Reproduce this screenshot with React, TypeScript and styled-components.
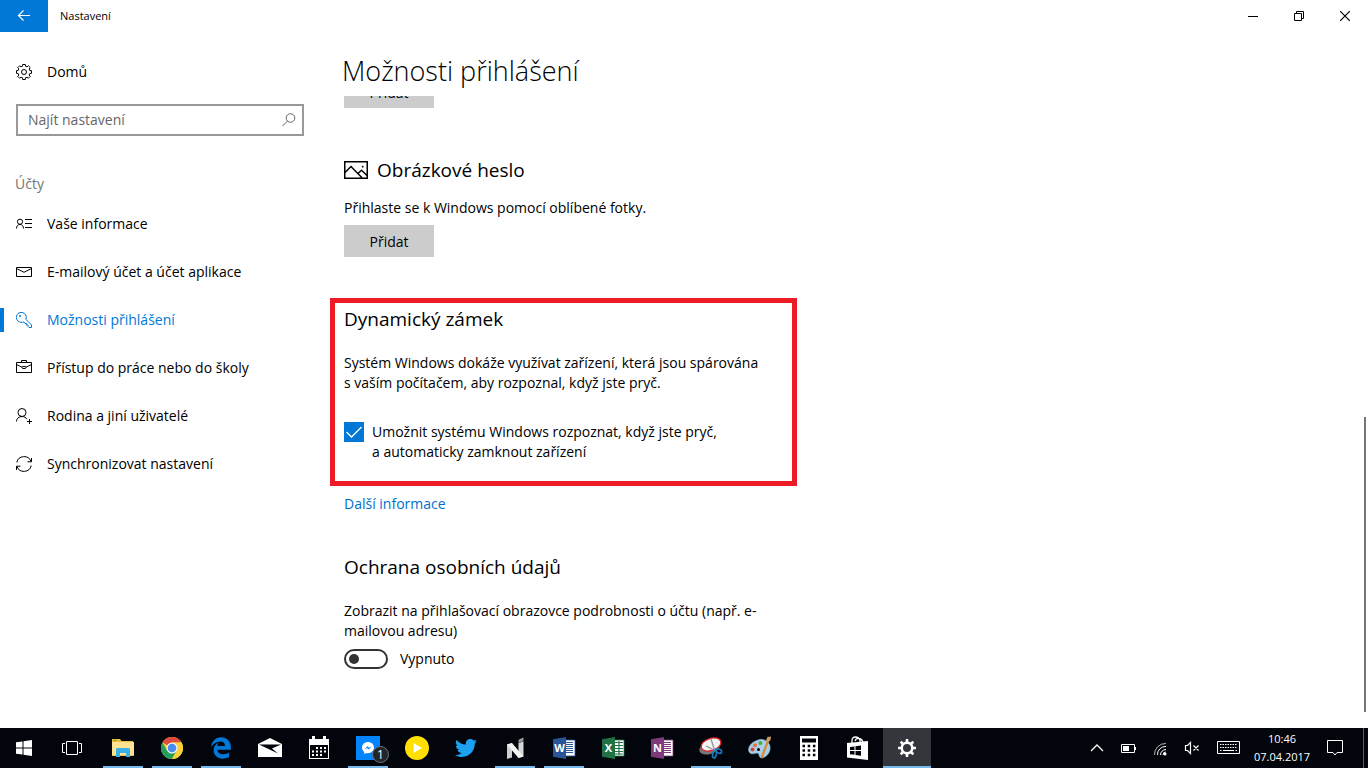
import React, { useState } from "react";
import styled, { createGlobalStyle, css } from "styled-components";
import { FaEdgeLegacy, FaTwitter } from "react-icons/fa6";

const accent = "#0078d7";

const GlobalStyle = createGlobalStyle`
  *, *::before, *::after { box-sizing: border-box; }
  body {
    margin: 0;
    background: #fff;
    color: #000;
    font-family: "Open Sans", "Noto Sans", sans-serif;
    font-size: 14px;
    line-height: 20px;
  }
  button, input { font: inherit; color: inherit; }
  h1, h2, p, ul { margin: 0; padding: 0; font-weight: 400; }
  ul { list-style: none; }
  svg { display: block; flex: none; }
`;

/* ---------- window ---------- */

const Desktop = styled.div`
  display: flex;
  flex-direction: column;
  min-height: 100vh;
`;

const TitleBar = styled.header`
  display: flex;
  align-items: center;
  height: 32px;
`;

const BackButton = styled.button`
  display: grid;
  place-items: center;
  width: 48px;
  height: 32px;
  padding: 0;
  border: 0;
  background: ${accent};
`;

const WindowTitle = styled.span`
  flex: 1;
  padding-left: 12px;
  font-size: 11px;
`;

const CaptionButton = styled.button`
  display: grid;
  place-items: center;
  width: 46px;
  height: 32px;
  padding: 0;
  border: 0;
  background: transparent;
`;

const Body = styled.div`
  flex: 1;
  display: grid;
  grid-template-columns: 320px 1fr;
`;

/* ---------- sidebar ---------- */

const Sidebar = styled.nav`
  display: flex;
  flex-direction: column;
  padding-top: 16px;
`;

const NavLink = styled.a<{ $active?: boolean }>`
  display: flex;
  align-items: center;
  height: 48px;
  color: ${(p) => (p.$active ? accent : "#000")};
  text-decoration: none;

  &::before {
    content: "";
    width: 4px;
    height: 24px;
    margin-right: 12px;
    background: ${(p) => (p.$active ? accent : "transparent")};
  }

  svg { margin-right: 15px; }
`;

const SearchBox = styled.label`
  display: flex;
  align-items: center;
  height: 32px;
  margin: 8px 16px 0;
  padding: 0 5px 0 10px;
  border: 2px solid #999;
  color: #666;
`;

const SearchInput = styled.input`
  flex: 1;
  min-width: 0;
  padding: 0;
  border: 0;
  outline: 0;
  background: transparent;

  &::placeholder { color: #666; opacity: 1; }
`;

const GroupLabel = styled.p`
  margin: 38px 0 6px;
  padding-left: 15px;
  color: #767676;
`;

/* ---------- content ---------- */

const Content = styled.main`
  display: flex;
  flex-direction: column;
`;

const PageTitle = styled.h1`
  height: 64px;
  padding: 21px 0 0 22px;
  font-size: 27px;
  font-weight: 300;
  line-height: 36px;
`;

const ScrollArea = styled.div`
  flex: 1;
  display: flex;
  justify-content: space-between;
`;

const Column = styled.div`
  width: 100%;
  max-width: 464px;
  padding: 0 0 40px 24px;
`;

const ScrollThumb = styled.div`
  align-self: flex-end;
  width: 2px;
  height: 295px;
  margin: 0 2px 16px 0;
  background: #767676;
`;

const ClippedRow = styled.div`
  display: flex;
  align-items: flex-end;
  height: 12px;
  overflow: hidden;
`;

const ActionButton = styled.button`
  flex: none;
  width: 90px;
  height: 32px;
  padding: 2px 0 0;
  border: 0;
  background: #ccc;
`;

const Section = styled.section<{ $space: number }>`
  display: flex;
  flex-direction: column;
  align-items: flex-start;
  margin-top: ${(p) => p.$space}px;
`;

const Highlight = styled(Section)`
  margin-left: -14px;
  margin-right: -13px;
  padding: 2px 18px 19px 9px;
  border: 5px solid #ed1c24;
`;

const SectionTitle = styled.h2<{ $gap?: number }>`
  display: flex;
  align-items: center;
  gap: 9px;
  margin-bottom: ${(p) => p.$gap ?? 20}px;
  font-size: 19px;
  line-height: 28px;
`;

const Paragraph = styled.p<{ $gap: number }>`
  margin-bottom: ${(p) => p.$gap}px;
`;

const CheckLabel = styled.label`
  display: flex;
  align-items: flex-start;
  gap: 8px;
`;

const CheckWrap = styled.span`
  display: grid;
  flex: none;
  width: 20px;
  height: 20px;

  > * { grid-area: 1 / 1; }
  svg { pointer-events: none; }
`;

const CheckInput = styled.input`
  appearance: none;
  width: 20px;
  height: 20px;
  margin: 0;
  border: 2px solid #333;

  &:checked { background: ${accent}; border-color: ${accent}; }
`;

const MoreLink = styled.a`
  display: inline-block;
  margin-top: 8px;
  color: #0070cc;
  text-decoration: none;
`;

const ToggleLabel = styled.label`
  display: flex;
  align-items: center;
  gap: 12px;
`;

const Toggle = styled.input`
  appearance: none;
  display: flex;
  align-items: center;
  width: 44px;
  height: 20px;
  margin: 0;
  padding: 0 3px;
  border: 2px solid #333;
  border-radius: 10px;

  &::before {
    content: "";
    width: 10px;
    height: 10px;
    border-radius: 50%;
    background: #333;
  }

  &:checked {
    justify-content: flex-end;
    border-color: ${accent};
    background: ${accent};
  }
  &:checked::before { background: #fff; }
`;

/* ---------- taskbar ---------- */

const Taskbar = styled.footer`
  display: flex;
  justify-content: space-between;
  height: 40px;
  background: #02050b;
  color: #fff;
`;

const AppList = styled.div`
  display: flex;
`;

const PinnedApps = styled.div`
  display: flex;
  gap: 1px;
  margin-left: 3px;
`;

const TaskButton = styled.button<{ $running?: boolean; $current?: boolean }>`
  position: relative;
  display: grid;
  place-items: center;
  width: 48px;
  height: 40px;
  padding: 0;
  border: 0;
  background: ${(p) => (p.$current ? "#33363b" : "transparent")};

  ${(p) =>
    (p.$running || p.$current) &&
    css`
      &::after {
        content: "";
        position: absolute;
        right: ${p.$current ? 0 : 4}px;
        bottom: 0;
        left: ${p.$current ? 0 : 4}px;
        height: 2px;
        background: #76b9ed;
      }
    `}
`;

const Badge = styled.span`
  position: absolute;
  right: 3px;
  bottom: 5px;
  width: 17px;
  height: 17px;
  border: 1px solid #70757a;
  border-radius: 50%;
  background: #22262b;
  font-size: 12px;
  line-height: 15px;
  text-align: center;
`;

const Tray = styled.div`
  display: flex;
`;

const TrayButton = styled.button<{ $width?: number }>`
  display: grid;
  place-items: center;
  width: ${(p) => p.$width ?? 32}px;
  padding: 0;
  border: 0;
  background: transparent;
`;

const Clock = styled.time`
  display: flex;
  flex-direction: column;
  align-items: center;
  justify-content: center;
  width: 64px;
  font-size: 11px;
  line-height: 18px;
`;

const ShowDesktop = styled.button`
  width: 5px;
  margin-left: 7px;
  padding: 0;
  border: 0;
  border-left: 1px solid #5a5d61;
  background: transparent;
`;

/* ---------- icons ---------- */

const gearPath = (teeth: number, c: number, outer: number, inner: number, spread = 0.22) => {
  const step = (Math.PI * 2) / teeth;
  const pt = (r: number, a: number) =>
    `${(c + r * Math.sin(a)).toFixed(2)} ${(c - r * Math.cos(a)).toFixed(2)}`;
  const parts: string[] = [];
  for (let i = 0; i < teeth; i++) {
    const a = i * step;
    parts.push(
      pt(inner, a - step * (spread + 0.06)),
      pt(outer, a - step * (spread - 0.03)),
      pt(outer, a + step * (spread - 0.03)),
      pt(inner, a + step * (spread + 0.06))
    );
  }
  return `M${parts.join("L")}Z`;
};

const Line = ({ size = 16, width = 1, children }: { size?: number; width?: number; children: React.ReactNode }) => (
  <svg width={size} height={size} viewBox={`0 0 ${size} ${size}`} fill="none" stroke="currentColor" strokeWidth={width} aria-hidden="true">
    {children}
  </svg>
);

const App24 = ({ children }: { children: React.ReactNode }) => (
  <svg width="24" height="24" viewBox="0 0 24 24" aria-hidden="true">{children}</svg>
);

const HomeGear = () => (
  <Line>
    <path d={gearPath(8, 8, 7.6, 6, 0.26)} strokeLinejoin="round" />
    <circle cx="8" cy="8" r="2.5" />
  </Line>
);

const InfoIcon = () => (
  <Line>
    <circle cx="4" cy="5.7" r="2.6" />
    <path d="M.5 12.500C.5 10 2 8.400 4 8.400S7.500 10 7.500 12.500M9 3.500H16M9 7.500H16M9 11.500H16" />
  </Line>
);

const MailIcon = () => (
  <Line>
    <path d="M.5 3.500H15.500V12.500H.5ZM.5 4.500L8 8.300L15.500 4.500" />
  </Line>
);

const KeyIcon = () => (
  <Line>
    <path d="M9.900 7.300A5 5 0 1 0 6.500 10.200L8 10L9 11.500H10.500V13H12V14.500L13 15.500H15.500V13Z" strokeLinejoin="round" />
    <circle cx="4" cy="4" r="1" fill="currentColor" stroke="none" />
  </Line>
);

const BriefcaseIcon = () => (
  <Line>
    <path d="M.5 2.500H15.500V12.500H.5ZM5.500 2.500V.5H10.500V2.500M.5 4.500L6 7.200M10 7.200L15.500 4.500" />
    <rect x="6" y="6.500" width="4" height="2" rx="1" />
  </Line>
);

const FamilyIcon = () => (
  <Line>
    <circle cx="6" cy="4.500" r="4" />
    <path d="M.5 13.500C.5 10.500 2.800 8.500 6 8.500C8.200 8.500 10 9.600 10.900 11.200M13.500 11V16M11 13.500H16" />
  </Line>
);

const SyncIcon = () => (
  <Line>
    <path d="M.8 6.500A7.400 7.400 0 0 1 15 5.500M15.500 2V5.800H11.500M15.200 9.500A7.400 7.400 0 0 1 1 10.500M.5 14V10.200H4.500" />
  </Line>
);

const SearchIcon = () => (
  <Line>
    <circle cx="9.500" cy="6" r="4.300" />
    <path d="M6.400 9.100L1.500 14" />
  </Line>
);

const PictureIcon = () => (
  <svg width="24" height="24" viewBox="0 0 24 24" fill="none" stroke="currentColor" strokeWidth="1.500" aria-hidden="true">
    <path d="M.75 3.750H23.250V20.250H.75ZM1 14.500L7 8.500L18 19.800M14 15.500L17.500 12.300L23 17.500" />
    <circle cx="18.700" cy="8.700" r=".9" fill="currentColor" stroke="none" />
  </svg>
);

const StartIcon = () => (
  <svg width="16" height="16" viewBox="0 0 16 16" fill="currentColor" aria-hidden="true">
    <path d="M0 2.300L6.500 1.400V7.500H0ZM7.500 1.200L16 0V7.500H7.500ZM0 8.500H6.500V14.600L0 13.700ZM7.500 8.500H16V16L7.500 14.800Z" />
  </svg>
);

const TaskViewIcon = () => (
  <Line size={20}>
    <path d="M4.500 3.500H15.500V16.500H4.500ZM3 5.500H.5V14.500H3M17 5.500H19.500V14.500H17" />
  </Line>
);

const ExplorerIcon = () => (
  <App24>
    <path d="M1 3H9L10.500 5H22V12H1Z" fill="#e8bd3c" />
    <path d="M3 4H5V5H3Z" fill="#43a047" />
    <path d="M1 6H23V20H1Z" fill="#fde391" />
    <path d="M1 19H23V20H1Z" fill="#e4c04d" />
    <path d="M5 21V13L6 12H18L19 13V21H15V17H9V21Z" fill="#3bb0e8" />
  </App24>
);

const ChromeIcon = () => (
  <App24>
    <circle cx="12" cy="12" r="11" fill="#fbd039" />
    <path d="M12 12L2.470 6.500A11 11 0 0 1 21.530 6.500H12Z" fill="#e04a3f" />
    <path d="M2.470 6.500A11 11 0 0 0 12 23L16.700 14.700L12 12L7.200 14.700Z" fill="#249e5a" />
    <path d="M12 6.500H21.530A11 11 0 0 1 12 23L16.800 14.700Z" fill="#fbd039" />
    <circle cx="12" cy="12" r="5.500" fill="#f4f4f4" />
    <circle cx="12" cy="12" r="4.300" fill="#4a8af4" />
  </App24>
);

const MailAppIcon = () => (
  <App24>
    <path d="M0 8L12 2L24 8V21H0Z" fill="#fff" />
    <path d="M1 8.500H23L14 12.500L20 17.500L10.500 13Z" fill="#02050b" />
  </App24>
);

const CalendarIcon = () => (
  <App24>
    <path d="M2 3H5V0H8V3H16V0H19V3H22V23H2ZM3 9V22H21V9Z" fill="#fff" fillRule="evenodd" />
    <path d="M9 12H19M5 15.500H19M5 19H16" stroke="#fff" strokeWidth="2" strokeDasharray="2 2" fill="none" />
  </App24>
);

const MessengerIcon = () => (
  <App24>
    <path d="M0 0H24V24H0Z" fill="#0084ff" />
    <path d="M12 6C8.600 6 6 8.400 6 11.600C6 13.400 6.900 14.900 8.200 15.900V18L10.200 17C13.900 18 18 15.600 18 11.600C18 8.400 15.400 6 12 6Z" fill="#fff" />
    <path d="M8.300 13.500L11.400 10.200L13 11.800L15.800 10.200L12.700 13.500L11.100 11.900Z" fill="#0084ff" />
  </App24>
);

const PlayIcon = () => (
  <App24>
    <circle cx="12" cy="12" r="12" fill="#ffe000" />
    <path d="M8.500 7L17 12L8.500 17Z" fill="#fff" />
  </App24>
);

const NIcon = () => (
  <App24>
    <path d="M4 8.500L9 7V21.500L4 23Z" fill="#cfcfcf" />
    <path d="M15.500 7L20.500 5.500V20.500L15.500 22Z" fill="#d6d6d6" />
    <path d="M4 8.500L9 7L20.500 20.500L15.500 22Z" fill="#f2f2f2" />
    <path d="M15.500 3.500L20.500 1.500V5.500L15.500 7Z" fill="#777" />
    <path d="M16 6L18 3M18 5.500L20 2" stroke="#c8c8c8" strokeWidth=".8" />
  </App24>
);

const OfficeIcon = ({ letter, color, grid }: { letter: string; color: string; grid?: boolean }) => (
  <App24>
    <path d="M13 4H23V20H13Z" fill="#fff" stroke={color} strokeWidth=".8" />
    {grid ? (
      <path d="M14 6.500H22M14 9.500H22M14 12.500H22M14 15.500H22M14 18H22M18 5V19" stroke={color} strokeWidth="1.200" />
    ) : (
      <path d="M14 6.500H21M14 8.500H21M14 10.500H21M14 12.500H21M14 14.500H21M14 16.500H21" stroke={color} strokeWidth="1" />
    )}
    <path d="M1 3.300L14 1V23L1 20.700Z" fill={color} />
    <text x="7.500" y="16" fill="#fff" fontSize="11" fontWeight="700" textAnchor="middle">{letter}</text>
  </App24>
);

const SnipIcon = () => (
  <App24>
    <ellipse cx="10.500" cy="12" rx="10.500" ry="6" transform="rotate(-18 10.500 12)" fill="#777" />
    <ellipse cx="12" cy="8.500" rx="10.200" ry="6" transform="rotate(-18 12 8.500)" fill="#f3f3f3" stroke="#d9272d" strokeWidth="1.300" />
    <path d="M12 3L15.500 14M7 10L17 15" stroke="#8b9299" strokeWidth="1.200" />
    <ellipse cx="15.500" cy="18.500" rx="1.800" ry="3.500" transform="rotate(15 15.500 18.500)" fill="none" stroke="#1878c0" strokeWidth="1.700" />
    <ellipse cx="19.800" cy="15" rx="3" ry="1.900" transform="rotate(25 19.800 15)" fill="none" stroke="#1878c0" strokeWidth="1.700" />
  </App24>
);

const PaintIcon = () => (
  <App24>
    <path d="M10 4C15 2 21 5 22 10C23 16 19 21 14 22C10 22 12 17 9 17C6 18 1 19 .5 14C.5 9 5 5.500 10 4Z" fill="#a9d0ea" stroke="#7aa9c9" strokeWidth=".6" />
    <circle cx="4.500" cy="13.500" r="2" fill="#d8442f" />
    <circle cx="7" cy="9.300" r="2" fill="#e07a2d" />
    <circle cx="12.300" cy="7" r="2" fill="#4cae45" />
    <circle cx="10.500" cy="13.500" r="1.500" fill="#02050b" />
    <path d="M20 5L13.500 22" stroke="#d88a35" strokeWidth="2.200" />
    <path d="M17.500 5.500L19.500 1L23 .5L22.500 4L20 7Z" fill="#c99a63" />
  </App24>
);

const CalcIcon = () => (
  <App24>
    <path d="M3 0H21V24H3ZM5 2.500V6.500H19V2.500Z" fill="#fff" fillRule="evenodd" />
    <path d="M5.500 10H19M5.500 14.500H19M5.500 19H19" stroke="#02050b" strokeWidth="2.500" strokeDasharray="2.500 2.700" />
  </App24>
);

const StoreIcon = () => (
  <App24>
    <path d="M6 7V4.500Q6 1 9.500 1Q13 1 14 4.500V7M9 5Q10 2 13 2.500Q16.500 3 17 7" fill="none" stroke="#fff" strokeWidth="1.300" />
    <path d="M1 7L22 5V24L1 21.500Z" fill="#fff" />
    <path d="M4 11L8.500 10.400V14H4ZM9.500 10.200L15 9.500V14H9.500ZM4 15H8.500V18.800L4 18.200ZM9.500 15H15V19.700L9.500 19Z" fill="#02050b" />
  </App24>
);

const SettingsIcon = () => (
  <App24>
    <path d={gearPath(8, 12, 9, 6.600, 0.2) + "M12 8A4 4 0 1 0 12 16A4 4 0 1 0 12 8Z"} fill="#fff" fillRule="evenodd" />
  </App24>
);

const BackIcon = () => (
  <Line>
    <path d="M14 7.500H2.500M7.500 2.500L2.500 7.500L7.500 12.500" stroke="#fff" strokeWidth="1.200" />
  </Line>
);

/* ---------- data ---------- */

const navItems = [
  { label: "Vaše informace", icon: <InfoIcon /> },
  { label: "E-mailový účet a účet aplikace", icon: <MailIcon /> },
  { label: "Možnosti přihlášení", icon: <KeyIcon />, active: true },
  { label: "Přístup do práce nebo do školy", icon: <BriefcaseIcon /> },
  { label: "Rodina a jiní uživatelé", icon: <FamilyIcon /> },
  { label: "Synchronizovat nastavení", icon: <SyncIcon /> },
];

const apps: { name: string; icon: React.ReactNode; running?: boolean; current?: boolean; badge?: string }[] = [
  { name: "Průzkumník souborů", icon: <ExplorerIcon />, running: true },
  { name: "Google Chrome", icon: <ChromeIcon />, running: true },
  { name: "Microsoft Edge", icon: <FaEdgeLegacy size={22} color={accent} />, running: true },
  { name: "Pošta", icon: <MailAppIcon /> },
  { name: "Kalendář", icon: <CalendarIcon /> },
  { name: "Messenger", icon: <MessengerIcon />, running: true, badge: "1" },
  { name: "Přehrávač", icon: <PlayIcon /> },
  { name: "Twitter", icon: <FaTwitter size={22} color="#1da1f2" /> },
  { name: "Nextgen Reader", icon: <NIcon />, running: true },
  { name: "Word", icon: <OfficeIcon letter="W" color="#2a5699" />, running: true },
  { name: "Excel", icon: <OfficeIcon letter="X" color="#207245" grid /> },
  { name: "OneNote", icon: <OfficeIcon letter="N" color="#80397b" /> },
  { name: "Výstřižky", icon: <SnipIcon />, running: true },
  { name: "Malování", icon: <PaintIcon /> },
  { name: "Kalkulačka", icon: <CalcIcon /> },
  { name: "Store", icon: <StoreIcon /> },
  { name: "Nastavení", icon: <SettingsIcon />, current: true },
];

export default function App() {
  const [lock, setLock] = useState(true);
  const [details, setDetails] = useState(false);

  return (
    <Desktop>
      <GlobalStyle />
      <TitleBar>
        <BackButton aria-label="Zpět"><BackIcon /></BackButton>
        <WindowTitle>Nastavení</WindowTitle>
        <CaptionButton aria-label="Minimalizovat">
          <Line size={10}><path d="M0 5.500H10" /></Line>
        </CaptionButton>
        <CaptionButton aria-label="Obnovit">
          <Line size={10}><path d="M.5 2.500H7.500V9.500H.5ZM2.500 2.500V.5H9.500V7.500H7.500" /></Line>
        </CaptionButton>
        <CaptionButton aria-label="Zavřít">
          <Line size={10}><path d="M0 0L10 10M10 0L0 10" strokeWidth="1.200" /></Line>
        </CaptionButton>
      </TitleBar>

      <Body>
        <Sidebar>
          <NavLink href="#home"><HomeGear />Domů</NavLink>
          <SearchBox>
            <SearchInput type="text" placeholder="Najít nastavení" aria-label="Najít nastavení" />
            <SearchIcon />
          </SearchBox>
          <GroupLabel>Účty</GroupLabel>
          <ul>
            {navItems.map((item) => (
              <li key={item.label}>
                <NavLink href="#account" $active={item.active}>{item.icon}{item.label}</NavLink>
              </li>
            ))}
          </ul>
        </Sidebar>

        <Content>
          <PageTitle>Možnosti přihlášení</PageTitle>
          <ScrollArea>
            <Column>
              <ClippedRow><ActionButton>Přidat</ActionButton></ClippedRow>

              <Section $space={48}>
                <SectionTitle $gap={14}><PictureIcon />Obrázkové heslo</SectionTitle>
                <Paragraph $gap={7}>Přihlaste se k Windows pomocí oblíbené fotky.</Paragraph>
                <ActionButton>Přidat</ActionButton>
              </Section>

              <Highlight $space={41}>
                <SectionTitle>Dynamický zámek</SectionTitle>
                <Paragraph $gap={29}>
                  Systém Windows dokáže využívat zařízení, která jsou spárována s&nbsp;vaším počítačem, aby rozpoznal, když jste pryč.
                </Paragraph>
                <CheckLabel>
                  <CheckWrap>
                    <CheckInput type="checkbox" checked={lock} onChange={(e) => setLock(e.target.checked)} />
                    <Line size={20}><path d="M2.500 10L7.500 15L17.500 5" stroke="#fff" strokeWidth="1.300" /></Line>
                  </CheckWrap>
                  <span>Umožnit systému Windows rozpoznat, když jste pryč, a&nbsp;automaticky zamknout zařízení</span>
                </CheckLabel>
              </Highlight>
              <MoreLink href="#more">Další informace</MoreLink>

              <Section $space={39}>
                <SectionTitle>Ochrana osobních údajů</SectionTitle>
                <Paragraph $gap={8}>
                  Zobrazit na přihlašovací obrazovce podrobnosti o účtu (např. e-mailovou adresu)
                </Paragraph>
                <ToggleLabel>
                  <Toggle type="checkbox" role="switch" checked={details} onChange={(e) => setDetails(e.target.checked)} />
                  {details ? "Zapnuto" : "Vypnuto"}
                </ToggleLabel>
              </Section>
            </Column>
            <ScrollThumb />
          </ScrollArea>
        </Content>
      </Body>

      <Taskbar>
        <AppList>
          <TaskButton aria-label="Start"><StartIcon /></TaskButton>
          <TaskButton aria-label="Zobrazení úkolů"><TaskViewIcon /></TaskButton>
          <PinnedApps>
            {apps.map((app) => (
              <TaskButton key={app.name} aria-label={app.name} $running={app.running} $current={app.current}>
                {app.icon}
                {app.badge && <Badge>{app.badge}</Badge>}
              </TaskButton>
            ))}
          </PinnedApps>
        </AppList>
        <Tray>
          <TrayButton aria-label="Skryté ikony">
            <Line><path d="M3 11L9 5L15 11" strokeWidth="1.300" /></Line>
          </TrayButton>
          <TrayButton aria-label="Baterie">
            <Line><path d="M1.500 4.500H14.500V12.500H1.500ZM15.500 7V10" /><path d="M3 6H9V11H3Z" fill="#fff" stroke="none" /></Line>
          </TrayButton>
          <TrayButton aria-label="Síť">
            <Line>
              <path d="M2.500 15A11 11 0 0 1 14 3.500" opacity=".7" />
              <path d="M5.500 15A8 8 0 0 1 14 6.500M8.500 15A5.500 5.500 0 0 1 14 9.500M11 15A3 3 0 0 1 14 12" />
              <circle cx="13" cy="14" r="1.500" fill="#fff" stroke="none" />
            </Line>
          </TrayButton>
          <TrayButton aria-label="Hlasitost">
            <Line><path d="M1.500 5.500H3.500L6.500 2.500V13.500L3.500 10.500H1.500ZM9.500 5.500L14.500 10.500M14.500 5.500L9.500 10.500" strokeWidth="1.200" /></Line>
          </TrayButton>
          <TrayButton $width={42} aria-label="Dotyková klávesnice">
            <svg width="24" height="14" viewBox="0 0 24 14" fill="none" stroke="#fff" aria-hidden="true">
              <path d="M.5 .5H22.500V12.500H.5Z" />
              <path d="M3 3.500H20M3 6.500H20" strokeDasharray="1.500 1" />
              <path d="M3 9.500H4.500M6 9.500H17M18.500 9.500H20" />
            </svg>
          </TrayButton>
          <Clock><span>10:46</span><span>07.04.2017</span></Clock>
          <TrayButton $width={42} aria-label="Centrum akcí">
            <Line><path d="M.5 .5H15.500V12.500H10L8 15L6 12.500H.5Z" /></Line>
          </TrayButton>
          <ShowDesktop aria-label="Zobrazit plochu" />
        </Tray>
      </Taskbar>
    </Desktop>
  );
}
